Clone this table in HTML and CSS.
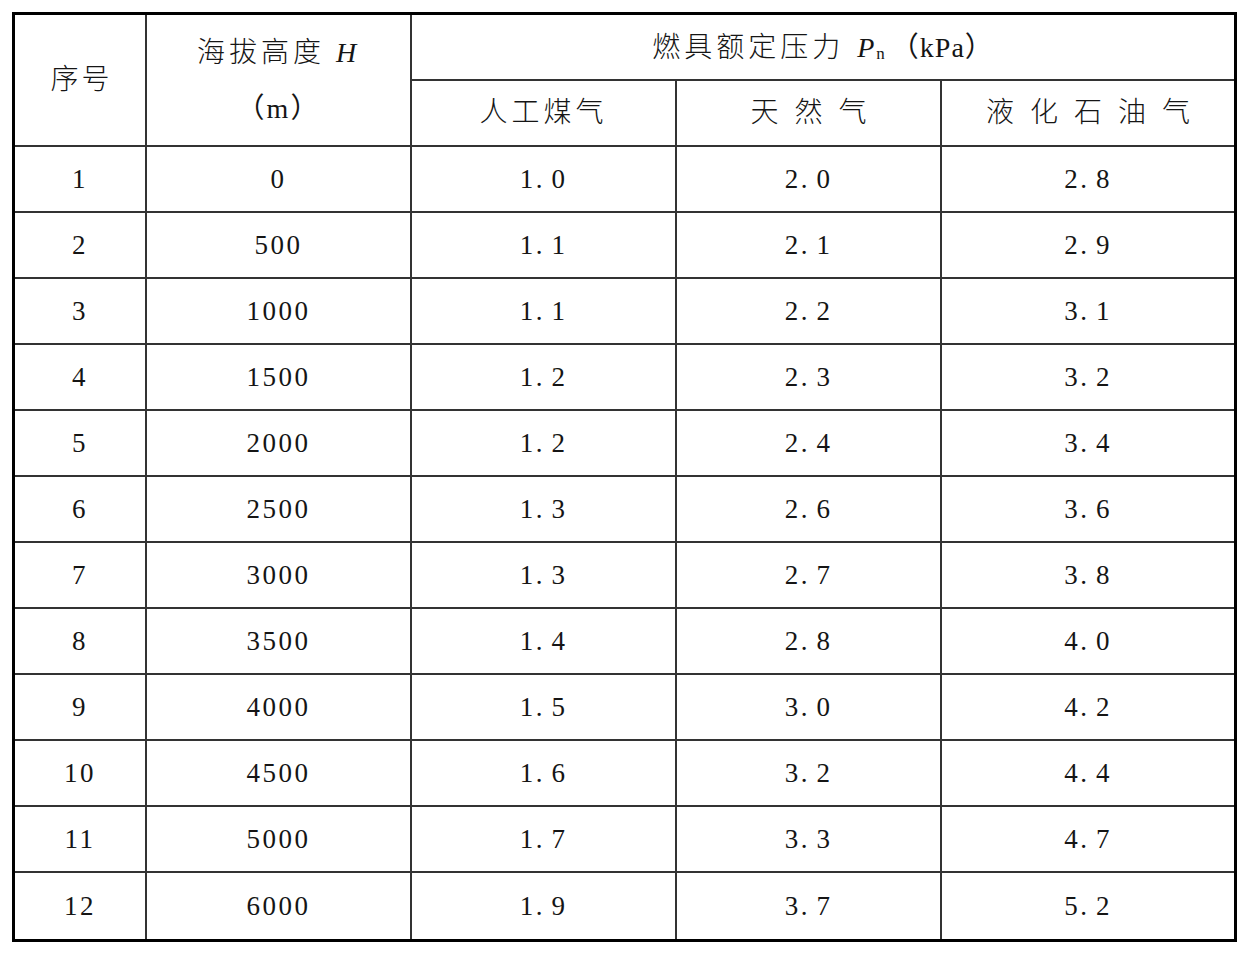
FILE: index.html
```html
<!DOCTYPE html>
<html lang="zh-CN">
<head>
<meta charset="utf-8">
<title>燃具额定压力</title>
<link rel="stylesheet" href="styles.css">
</head>
<body>
<table class="tbl">
  <colgroup>
    <col class="w1"><col class="w2"><col class="w3"><col class="w4"><col class="w5">
  </colgroup>
  <thead>
    <tr>
      <th rowspan="2" class="hd-no">序号</th>
      <th rowspan="2" class="hd-alt"><span class="l1">海拔高度 <i>H</i></span><br><span class="l2">（m）</span></th>
      <th colspan="3" class="hd-p">燃具额定压力 <i>P</i><span class="sub">n</span><span class="unit">（kPa）</span></th>
    </tr>
    <tr>
      <th class="hd-g1">人工煤气</th>
      <th><span class="wide">天然气</span></th>
      <th><span class="wide">液化石油气</span></th>
    </tr>
  </thead>
  <tbody>
    <tr><td>1</td><td>0</td><td>1<span class="pt">.</span>0</td><td>2<span class="pt">.</span>0</td><td>2<span class="pt">.</span>8</td></tr>
    <tr><td>2</td><td>500</td><td>1<span class="pt">.</span>1</td><td>2<span class="pt">.</span>1</td><td>2<span class="pt">.</span>9</td></tr>
    <tr><td>3</td><td>1000</td><td>1<span class="pt">.</span>1</td><td>2<span class="pt">.</span>2</td><td>3<span class="pt">.</span>1</td></tr>
    <tr><td>4</td><td>1500</td><td>1<span class="pt">.</span>2</td><td>2<span class="pt">.</span>3</td><td>3<span class="pt">.</span>2</td></tr>
    <tr><td>5</td><td>2000</td><td>1<span class="pt">.</span>2</td><td>2<span class="pt">.</span>4</td><td>3<span class="pt">.</span>4</td></tr>
    <tr><td>6</td><td>2500</td><td>1<span class="pt">.</span>3</td><td>2<span class="pt">.</span>6</td><td>3<span class="pt">.</span>6</td></tr>
    <tr><td>7</td><td>3000</td><td>1<span class="pt">.</span>3</td><td>2<span class="pt">.</span>7</td><td>3<span class="pt">.</span>8</td></tr>
    <tr><td>8</td><td>3500</td><td>1<span class="pt">.</span>4</td><td>2<span class="pt">.</span>8</td><td>4<span class="pt">.</span>0</td></tr>
    <tr><td>9</td><td>4000</td><td>1<span class="pt">.</span>5</td><td>3<span class="pt">.</span>0</td><td>4<span class="pt">.</span>2</td></tr>
    <tr><td>10</td><td>4500</td><td>1<span class="pt">.</span>6</td><td>3<span class="pt">.</span>2</td><td>4<span class="pt">.</span>4</td></tr>
    <tr><td>11</td><td>5000</td><td>1<span class="pt">.</span>7</td><td>3<span class="pt">.</span>3</td><td>4<span class="pt">.</span>7</td></tr>
    <tr><td>12</td><td>6000</td><td>1<span class="pt">.</span>9</td><td>3<span class="pt">.</span>7</td><td>5<span class="pt">.</span>2</td></tr>
  </tbody>
</table>
</body>
</html>
```
FILE: styles.css
```css
html, body {
  margin: 0;
  padding: 0;
  background: #ffffff;
}

body {
  padding: 12px 0 0 12px;
  font-family: "Liberation Serif", "Noto Sans CJK SC", serif;
  color: #151515;
}

.tbl {
  table-layout: fixed;
  width: 1225px;
  border-collapse: separate;
  border-spacing: 0;
  border: 3px solid #000;
  font-size: 27px;
  font-weight: normal;
}

.w1 { width: 132px; }
.w2 { width: 265px; }
.w3 { width: 265px; }
.w4 { width: 265px; }
.w5 { width: 292px; }

.tbl tr {
  height: 66px;
}

.tbl th,
.tbl td {
  padding: 0;
  text-align: center;
  vertical-align: middle;
  font-weight: normal;
  border-right: 2px solid #333;
  border-bottom: 2px solid #333;
  line-height: 1;
}

.tbl th {
  font-size: 28px;
  font-weight: 300;
}

.tbl th i,
.tbl th .sub,
.tbl th .l2,
.tbl th .unit {
  font-weight: 400;
}

.tbl tr > :last-child {
  border-right: none;
}

.tbl thead tr:first-child > .hd-p {
  border-right: none;
}

.tbl tbody tr:last-child > td {
  border-bottom: none;
}

.tbl td {
  letter-spacing: 2.5px;
}

.pt {
  letter-spacing: 9px;
}

.tbl .hd-no {
  letter-spacing: 3px;
  padding-left: 3px;
}

.tbl .hd-alt {
  line-height: 56px;
  letter-spacing: 4px;
  padding-top: 2px;
}

.hd-alt .l2 {
  letter-spacing: 2px;
}

.tbl .hd-p {
  letter-spacing: 4px;
  padding-top: 2px;
}

.hd-p i {
  margin-left: 2px;
  letter-spacing: 2px;
}

.sub {
  font-size: 17px;
  letter-spacing: 0;
  vertical-align: -2px;
}

.unit {
  letter-spacing: 1px;
  margin-left: 6px;
}

.tbl .hd-g1 {
  letter-spacing: 4px;
}

.wide {
  letter-spacing: 16px;
  margin-right: -16px;
}
```
